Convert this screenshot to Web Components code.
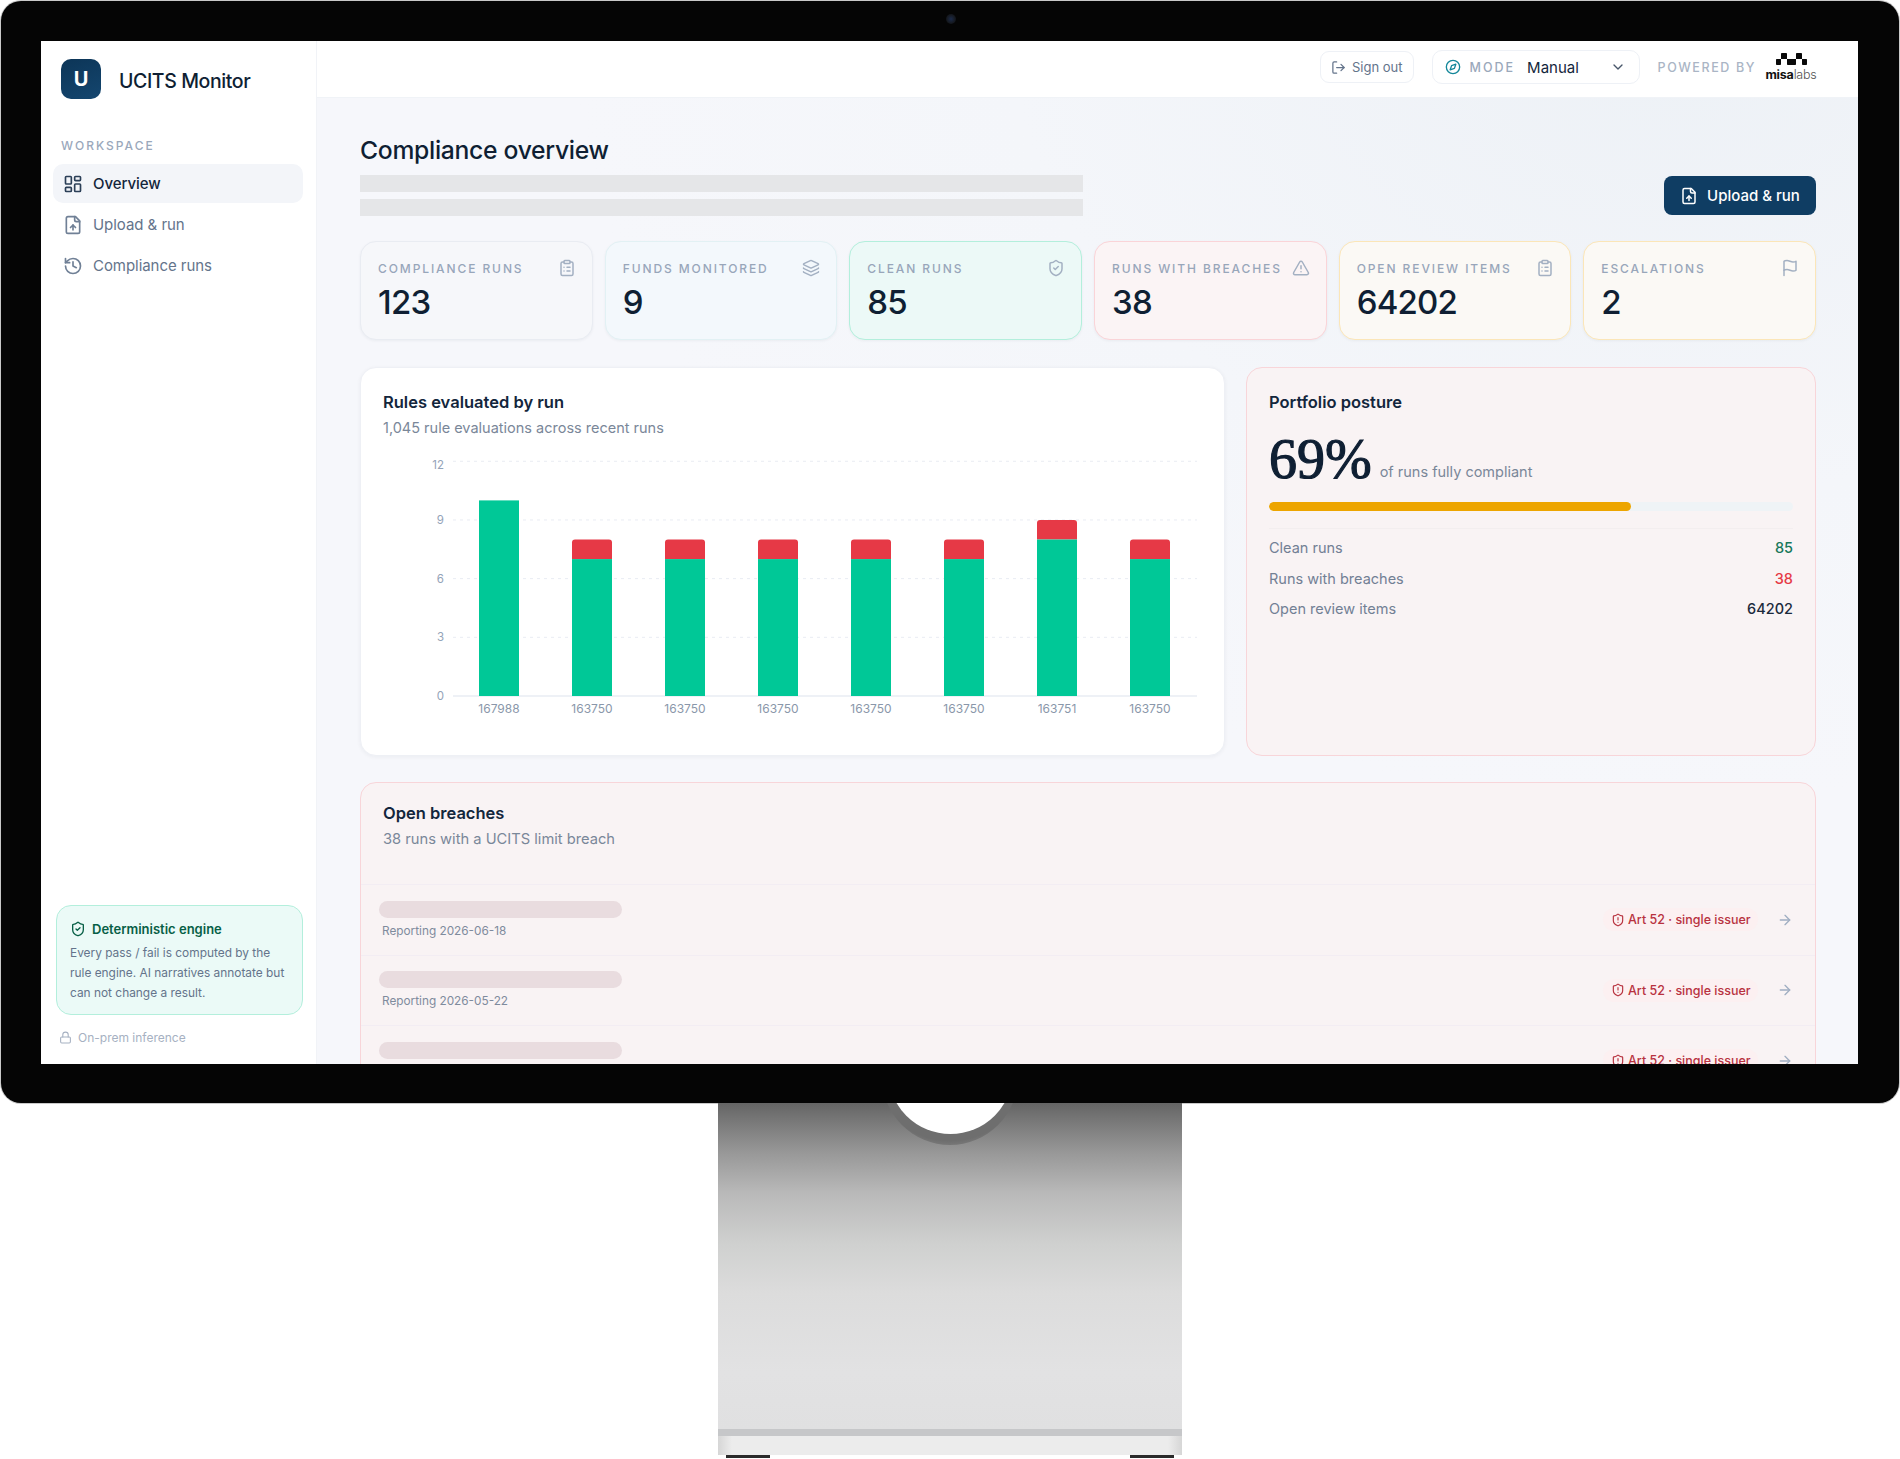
<!DOCTYPE html>
<html lang="en">
<head>
<meta charset="utf-8">
<title>UCITS Monitor</title>
<style>
  html, body { margin: 0; background: #fff; }
  body { font-family: "Inter", "Liberation Sans", sans-serif; color: #0f1f33; width: 1900px; height: 1459px; overflow: hidden; }
</style>
</head>
<body>
<monitor-frame>
  <app-sidebar slot="side"></app-sidebar>
  <app-topbar slot="top"></app-topbar>
  <page-head></page-head>
  <kpi-row>
    <kpi-card label="Compliance runs" value="123" icon="clipboard" tone="plain"></kpi-card>
    <kpi-card label="Funds monitored" value="9" icon="layers" tone="blue"></kpi-card>
    <kpi-card label="Clean runs" value="85" icon="shieldcheck" tone="green"></kpi-card>
    <kpi-card label="Runs with breaches" value="38" icon="triangle" tone="red"></kpi-card>
    <kpi-card label="Open review items" value="64202" icon="clipboard" tone="amber"></kpi-card>
    <kpi-card label="Escalations" value="2" icon="flag" tone="amber"></kpi-card>
  </kpi-row>
  <chart-row>
    <rules-chart></rules-chart>
    <posture-card></posture-card>
  </chart-row>
  <breach-card>
    <breach-row date="Reporting 2026-06-18"></breach-row>
    <breach-row date="Reporting 2026-05-22"></breach-row>
    <breach-row date="Reporting 2026-05-22"></breach-row>
  </breach-card>
</monitor-frame>
<monitor-stand></monitor-stand>

<script>
const ICONS = {
  dashboard: '<rect x="3" y="3" width="7" height="9" rx="1"/><rect x="14" y="3" width="7" height="5" rx="1"/><rect x="14" y="12" width="7" height="9" rx="1"/><rect x="3" y="16" width="7" height="5" rx="1"/>',
  fileup: '<path d="M15 2H6a2 2 0 0 0-2 2v16a2 2 0 0 0 2 2h12a2 2 0 0 0 2-2V7Z"/><path d="M14 2v4a2 2 0 0 0 2 2h4"/><path d="M12 12v6"/><path d="m15 15-3-3-3 3"/>',
  history: '<path d="M3 12a9 9 0 1 0 9-9 9.75 9.75 0 0 0-6.74 2.74L3 8"/><path d="M3 3v5h5"/><path d="M12 7v5l4 2"/>',
  clipboard: '<rect x="8" y="2" width="8" height="4" rx="1"/><path d="M16 4h2a2 2 0 0 1 2 2v14a2 2 0 0 1-2 2H6a2 2 0 0 1-2-2V6a2 2 0 0 1 2-2h2"/><path d="M12 11h4"/><path d="M12 16h4"/><path d="M8 11h.01"/><path d="M8 16h.01"/>',
  layers: '<path d="M12.83 2.18a2 2 0 0 0-1.66 0L2.6 6.08a1 1 0 0 0 0 1.83l8.58 3.91a2 2 0 0 0 1.66 0l8.58-3.9a1 1 0 0 0 0-1.83Z"/><path d="M2 12a1 1 0 0 0 .58.91l8.6 3.91a2 2 0 0 0 1.65 0l8.58-3.9A1 1 0 0 0 22 12"/><path d="M2 17a1 1 0 0 0 .58.91l8.6 3.91a2 2 0 0 0 1.65 0l8.58-3.9A1 1 0 0 0 22 17"/>',
  shieldcheck: '<path d="M20 13c0 5-3.5 7.5-7.66 8.95a1 1 0 0 1-.67-.01C7.5 20.5 4 18 4 13V6a1 1 0 0 1 1-1c2 0 4.5-1.2 6.24-2.72a1.17 1.17 0 0 1 1.52 0C14.51 3.81 17 5 19 5a1 1 0 0 1 1 1z"/><path d="m9 12 2 2 4-4"/>',
  shieldalert: '<path d="M20 13c0 5-3.5 7.5-7.66 8.95a1 1 0 0 1-.67-.01C7.5 20.5 4 18 4 13V6a1 1 0 0 1 1-1c2 0 4.5-1.2 6.24-2.72a1.17 1.17 0 0 1 1.52 0C14.51 3.81 17 5 19 5a1 1 0 0 1 1 1z"/><path d="M12 8v4"/><path d="M12 16h.01"/>',
  triangle: '<path d="m21.73 18-8-14a2 2 0 0 0-3.48 0l-8 14A2 2 0 0 0 4 21h16a2 2 0 0 0 1.73-3"/><path d="M12 9v4"/><path d="M12 17h.01"/>',
  flag: '<path d="M4 15s1-1 4-1 5 2 8 2 4-1 4-1V3s-1 1-4 1-5-2-8-2-4 1-4 1z"/><path d="M4 22v-7"/>',
  logout: '<path d="M9 21H5a2 2 0 0 1-2-2V5a2 2 0 0 1 2-2h4"/><path d="m16 17 5-5-5-5"/><path d="M21 12H9"/>',
  compass: '<circle cx="12" cy="12" r="10"/><path d="m16.24 7.76-2.12 6.36-6.36 2.12 2.12-6.36 6.36-2.12z"/>',
  chevron: '<path d="m6 9 6 6 6-6"/>',
  arrow: '<path d="M5 12h14"/><path d="m12 5 7 7-7 7"/>',
  lock: '<rect x="3" y="11" width="18" height="11" rx="2"/><path d="M7 11V7a5 5 0 0 1 10 0v4"/>'
};

function ico(name, size, color) {
  return `<svg width="${size}" height="${size}" viewBox="0 0 24 24" fill="none" stroke="${color}" stroke-width="2" stroke-linecap="round" stroke-linejoin="round" style="display:block;flex:none">${ICONS[name]}</svg>`;
}

class MonitorFrame extends HTMLElement {
  constructor() {
    super();
    this.attachShadow({ mode: 'open' }).innerHTML = `
    <style>
      :host { display: block; position: relative; box-sizing: border-box; width: 1898px; height: 1102px; margin: 1px 0 0 1px; padding: 40px 41px 39px 40px; background: #050505; border-radius: 20px; box-shadow: 0 0 0 1px #c9c9c9; }
      .camera { position: absolute; left: 945px; top: 13px; width: 10px; height: 10px; border-radius: 50%; background: radial-gradient(circle, #1b2a4a 0, #161a22 55%, #0a0a0a 100%); }
      .screen { display: flex; height: 1023px; background: #fff; overflow: hidden; }
      .main { flex: 1; min-width: 0; display: flex; flex-direction: column; background: radial-gradient(ellipse 1100px 760px at 88% 0%, #edf1f6 0%, #f4f6fa 60%, #f6f7fb 100%); }
      .content { flex: 1; padding: 0 42px 0 43px; overflow: hidden; }
    </style>
    <div class="camera"></div>
    <div class="screen">
      <slot name="side"></slot>
      <div class="main">
        <slot name="top"></slot>
        <div class="content"><slot></slot></div>
      </div>
    </div>`;
  }
}

class NavItem extends HTMLElement {
  connectedCallback() {
    const active = this.hasAttribute('active');
    this.attachShadow({ mode: 'open' }).innerHTML = `
    <style>
      :host { display: flex; align-items: center; gap: 10px; height: 39px; padding-left: 10px; border-radius: 10px; font-size: 15px; letter-spacing: -0.05px; font-weight: ${active ? 500 : 400}; color: ${active ? '#13263c' : '#64748b'}; background: ${active ? '#f3f5f9' : 'transparent'}; }
    </style>
    ${ico(this.getAttribute('icon'), 20, active ? '#2b3f57' : '#708096')}<span>${this.getAttribute('label')}</span>`;
  }
}

class AppSidebar extends HTMLElement {
  constructor() {
    super();
    this.attachShadow({ mode: 'open' }).innerHTML = `
    <style>
      :host { display: flex; flex-direction: column; box-sizing: border-box; width: 276px; height: 100%; padding: 18px 13px 0 12px; background: #fff; border-right: 1px solid #f1f3f7; }
      .brand { display: flex; align-items: center; gap: 18px; padding-left: 8px; }
      .logo { width: 40px; height: 40px; border-radius: 10px; background: linear-gradient(160deg, #0c3557, #14466f); color: #fff; display: flex; align-items: center; justify-content: center; font-weight: 700; font-size: 20px; }
      .name { margin-top: 3px; font-size: 19.5px; font-weight: 500; letter-spacing: -0.4px; color: #0f1f33; }
      .section { margin: 39px 0 10px 8px; height: 16px; line-height: 16px; font-size: 12px; font-weight: 500; letter-spacing: 2px; color: #9aa8bb; }
      nav { display: flex; flex-direction: column; gap: 2px; }
      .engine { margin: auto 0 0 3px; box-sizing: border-box; height: 110px; padding: 14px 6px 0 13px; border: 1px solid #b3efdc; border-radius: 15px; background: #ebfaf7; }
      .engine h4 { display: flex; align-items: center; gap: 6px; margin: 0 0 5px 0; font-size: 13px; line-height: 18px; font-weight: 600; color: #075f46; }
      .engine p { margin: 0; font-size: 11.9px; line-height: 20px; color: #64748b; white-space: nowrap; }
      .prem { display: flex; align-items: center; gap: 6px; height: 16px; margin: 14px 0 19px 6px; font-size: 12px; color: #a6b1c2; }
    </style>
    <div class="brand"><div class="logo">U</div><div class="name">UCITS Monitor</div></div>
    <div class="section">WORKSPACE</div>
    <nav>
      <nav-item icon="dashboard" label="Overview" active></nav-item>
      <nav-item icon="fileup" label="Upload &amp; run"></nav-item>
      <nav-item icon="history" label="Compliance runs"></nav-item>
    </nav>
    <div class="engine">
      <h4>${ico('shieldcheck', 16, '#075f46')}Deterministic engine</h4>
      <p>Every pass / fail is computed by the<br>rule engine. AI narratives annotate but<br>can not change a result.</p>
    </div>
    <div class="prem">${ico('lock', 13, '#a6b1c2')}On-prem inference</div>`;
  }
}

class AppTopbar extends HTMLElement {
  constructor() {
    super();
    this.attachShadow({ mode: 'open' }).innerHTML = `
    <style>
      :host { display: flex; align-items: center; justify-content: flex-end; box-sizing: border-box; height: 57px; flex: none; padding: 0 42px 4px 0; background: #fff; border-bottom: 1px solid #f0f3f7; }
      .signout { display: flex; align-items: center; gap: 6px; box-sizing: border-box; height: 32px; padding: 0 10px; border: 1px solid #eef1f6; border-radius: 9px; font-size: 13px; color: #64748b; }
      .mode { display: flex; align-items: center; box-sizing: border-box; width: 208px; height: 34px; margin-left: 18px; padding: 0 13px 0 12px; border: 1px solid #eef1f6; border-radius: 10px; }
      .mode b { margin-left: 9px; font-size: 12.5px; font-weight: 500; letter-spacing: 2px; color: #9aa8bb; }
      .mode span { margin-left: 12px; flex: 1; font-size: 15px; color: #13263c; }
      .powered { margin-left: 18px; font-size: 12.5px; font-weight: 500; letter-spacing: 1.6px; color: #aab5c5; white-space: nowrap; }
      .misa { margin-left: 10px; width: 50px; display: flex; flex-direction: column; align-items: center; }
      .misa svg { display: block; }
      .misa div { margin-top: 2px; font-size: 12.5px; line-height: 15px; letter-spacing: -0.2px; color: #555; font-weight: 300; white-space: nowrap; }
      .misa strong { font-weight: 700; color: #111; }
    </style>
    <div class="signout">${ico('logout', 15, '#64748b')}Sign out</div>
    <div class="mode">${ico('compass', 16, '#14879a')}<b>MODE</b><span>Manual</span>${ico('chevron', 16, '#475569')}</div>
    <div class="powered">POWERED BY</div>
    <div class="misa">
      <svg width="31" height="12" viewBox="0 0 31 12" fill="#0a0a0a"><path d="M5 .8q0-.8.8-.8h4.4q.8 0 .8.8V6H5zM20 .8q0-.8.8-.8h4.4q.8 0 .8.8V6h-6zM0 6.6Q0 6 .8 6H5v5.2q0 .8-.8.8H.8q-.8 0-.8-.8zM11 6h9v5.2q0 .8-.8.8h-7.4q-.8 0-.8-.8zM26 6h4.2q.8 0 .8.6v4.6q0 .8-.8.8h-3.4q-.8 0-.8-.8z"/></svg>
      <div><strong>misa</strong>labs</div>
    </div>`;
  }
}

class PageHead extends HTMLElement {
  constructor() {
    super();
    this.attachShadow({ mode: 'open' }).innerHTML = `
    <style>
      :host { display: flex; justify-content: space-between; align-items: flex-end; padding-top: 36px; }
      h1 { margin: 0; font-size: 24.7px; line-height: 32px; font-weight: 500; letter-spacing: -0.3px; color: #0f1f33; }
      .bar { width: 723px; height: 17px; background: #e5e6e8; }
      .bar.one { margin-top: 9px; }
      .bar.two { margin-top: 7px; }
      .upload { display: flex; align-items: center; justify-content: center; gap: 9px; box-sizing: border-box; width: 152px; height: 39px; margin-bottom: 1px; border-radius: 8px; background: #0f3d63; color: #fff; font-size: 15px; font-weight: 500; }
    </style>
    <div>
      <h1>Compliance overview</h1>
      <div class="bar one"></div>
      <div class="bar two"></div>
    </div>
    <div class="upload">${ico('fileup', 18, '#fff')}Upload &amp; run</div>`;
  }
}

class KpiRow extends HTMLElement {
  constructor() {
    super();
    this.attachShadow({ mode: 'open' }).innerHTML = `
    <style>
      :host { display: grid; grid-template-columns: repeat(6, 1fr); gap: 12px; margin-top: 25px; }
    </style>
    <slot></slot>`;
  }
}

const KPI_TONES = {
  plain: ['#f6f7fa', '#e9ecf2'],
  blue: ['#f3f8fc', '#e2f1f4'],
  green: ['#ecf9f7', '#b3efdc'],
  red: ['#fbf4f5', '#fad4d8'],
  amber: ['#fbf9f5', '#fbe6b8']
};

class KpiCard extends HTMLElement {
  connectedCallback() {
    const [bg, border] = KPI_TONES[this.getAttribute('tone')];
    this.attachShadow({ mode: 'open' }).innerHTML = `
    <style>
      :host { display: block; box-sizing: border-box; height: 99px; padding: 16px 16px 0 17px; background: ${bg}; border: 1.5px solid ${border}; border-radius: 16px; box-shadow: 0 1px 3px rgba(15, 31, 51, .05); }
      .head { display: flex; justify-content: space-between; align-items: center; height: 20px; }
      .label { font-size: 12px; font-weight: 500; letter-spacing: 1.9px; color: #98a6ba; text-transform: uppercase; white-space: nowrap; }
      .value { margin-top: 6px; font-size: 33px; line-height: 36px; font-weight: 500; letter-spacing: -0.8px; color: #0f1f33; }
    </style>
    <div class="head"><span class="label">${this.getAttribute('label')}</span>${ico(this.getAttribute('icon'), 18, '#a3b0c2')}</div>
    <div class="value">${this.getAttribute('value')}</div>`;
  }
}

class ChartRow extends HTMLElement {
  constructor() {
    super();
    this.attachShadow({ mode: 'open' }).innerHTML = `
    <style>
      :host { display: grid; grid-template-columns: 865px 1fr; gap: 21px; height: 389px; margin-top: 27px; }
    </style>
    <slot></slot>`;
  }
}

class RulesChart extends HTMLElement {
  constructor() {
    super();
    // chart coords are screen px minus the svg origin (383, 438)
    const runs = [['167988', 10, 0], ['163750', 7, 1], ['163750', 7, 1], ['163750', 7, 1], ['163750', 7, 1], ['163750', 7, 1], ['163751', 8, 1], ['163750', 7, 1]];
    const unit = 19.56, base = 258, left = 70, right = 814;
    let marks = '';
    [[12, 4], [9, 0], [6, 0], [3, 0], [0, 0]].forEach(([t, nudge]) => {
      const y = base - t * unit;
      marks += `<line x1="${left}" x2="${right}" y1="${y}" y2="${y}" stroke="#e9ecf3" stroke-width="${t ? 1 : 1.5}" ${t ? 'stroke-dasharray="3 4"' : ''}/>`;
      marks += `<text x="61" y="${y + 4 + nudge}" text-anchor="end" font-size="11.5" fill="#94a3b8">${t}</text>`;
    });
    runs.forEach(([id, ok, bad], i) => {
      const x = 96 + i * 93;
      if (bad) marks += `<path d="M${x} ${base - ok * unit}v${-(bad * unit - 3)}q0-3 3-3h34q3 0 3 3v${bad * unit - 3}z" fill="#e63946"/>`;
      marks += `<rect x="${x}" y="${base - ok * unit}" width="40" height="${ok * unit}" fill="#00c897"/>`;
      marks += `<text x="${x + 20}" y="275" text-anchor="middle" font-size="12" fill="#8a97aa">${id}</text>`;
    });
    this.attachShadow({ mode: 'open' }).innerHTML = `
    <style>
      :host { display: block; box-sizing: border-box; padding: 23px 22px 0; background: #fff; border: 1px solid #eef0f5; border-radius: 16px; box-shadow: 0 1px 4px rgba(15, 31, 51, .05); }
      h3 { margin: 0; font-size: 16.5px; line-height: 22px; font-weight: 600; color: #13263c; }
      p { margin: 5px 0 0; font-size: 14.5px; line-height: 20px; color: #7a8799; }
      svg { display: block; font-family: "Inter", "Liberation Sans", sans-serif; }
    </style>
    <h3>Rules evaluated by run</h3>
    <p>1,045 rule evaluations across recent runs</p>
    <svg width="820" height="290" viewBox="0 0 820 290">${marks}</svg>`;
  }
}

class PostureCard extends HTMLElement {
  constructor() {
    super();
    this.attachShadow({ mode: 'open' }).innerHTML = `
    <style>
      :host { display: block; box-sizing: border-box; padding: 23px 22px 0; background: #f9f3f4; border: 1.5px solid #f8d5d9; border-radius: 16px; }
      h3 { margin: 0; font-size: 16.5px; line-height: 22px; font-weight: 600; color: #13263c; }
      .big { display: flex; align-items: baseline; gap: 8px; margin-top: 18px; }
      .pct { font-family: "Liberation Serif", serif; font-size: 56px; line-height: 56px; color: #0f1f33; -webkit-text-stroke: 1.2px #0f1f33; }
      .of { position: relative; top: -1px; font-size: 14.5px; color: #7a8799; }
      .track { height: 9px; margin-top: 15px; border-radius: 5px; background: #eff3f6; overflow: hidden; }
      .fill { width: 69%; height: 100%; border-radius: 5px; background: #eda500; }
      .rows { display: flex; flex-direction: column; gap: 10.5px; margin-top: 17px; padding-top: 9px; border-top: 1px solid #f3eeef; }
      .row { display: flex; justify-content: space-between; font-size: 14.5px; line-height: 20px; color: #728094; }
      .row b { font-weight: 500; }
    </style>
    <h3>Portfolio posture</h3>
    <div class="big"><span class="pct">69%</span><span class="of">of runs fully compliant</span></div>
    <div class="track"><div class="fill"></div></div>
    <div class="rows">
      <div class="row"><span>Clean runs</span><b style="color:#17775a">85</b></div>
      <div class="row"><span>Runs with breaches</span><b style="color:#e63946">38</b></div>
      <div class="row"><span>Open review items</span><b style="color:#1c2a3c">64202</b></div>
    </div>`;
  }
}

class BreachCard extends HTMLElement {
  constructor() {
    super();
    this.attachShadow({ mode: 'open' }).innerHTML = `
    <style>
      :host { display: block; margin-top: 26px; background: #f9f3f4; border: 1.5px solid #f8d5d9; border-radius: 16px 16px 0 0; }
      header { padding: 19px 22px 35px; }
      h3 { margin: 0; font-size: 16.5px; line-height: 22px; font-weight: 600; color: #13263c; }
      p { margin: 5px 0 0; font-size: 14.7px; line-height: 20px; color: #7a8799; }
    </style>
    <header>
      <h3>Open breaches</h3>
      <p>38 runs with a UCITS limit breach</p>
    </header>
    <slot></slot>`;
  }
}

class BreachRow extends HTMLElement {
  connectedCallback() {
    this.attachShadow({ mode: 'open' }).innerHTML = `
    <style>
      :host { display: flex; align-items: center; justify-content: space-between; box-sizing: border-box; height: 70.5px; padding: 0 22px 0 18px; border-top: 1px solid #f3edf3; }
      .pill { width: 243px; height: 17px; border-radius: 9px; background: #e9dcdf; }
      .date { margin: 5px 0 0 3px; font-size: 11.8px; line-height: 16px; color: #7f8b9d; }
      .right { display: flex; align-items: center; gap: 19px; }
      .badge { display: flex; align-items: center; gap: 3px; box-sizing: border-box; width: 155px; height: 23px; padding-left: 8px; border-radius: 12px; background: #fcf0f1; font-size: 12.5px; font-weight: 500; color: #b8323f; white-space: nowrap; }
    </style>
    <div>
      <div class="pill"></div>
      <div class="date">${this.getAttribute('date')}</div>
    </div>
    <div class="right">
      <span class="badge">${ico('shieldalert', 14, '#b8323f')}Art 52 · single issuer</span>
      ${ico('arrow', 16, '#a0aec2')}
    </div>`;
  }
}

class MonitorStand extends HTMLElement {
  constructor() {
    super();
    this.attachShadow({ mode: 'open' }).innerHTML = `
    <style>
      :host { display: block; position: relative; box-sizing: border-box; width: 464px; height: 355px; margin-left: 718px; background: linear-gradient(180deg, #656565 0, #7c7c7c 22px, #989898 50px, #b9b9b9 90px, #cfd0cf 140px, #dcdcdc 190px, #e2e2e3 270px, #e0e0e1 326px) no-repeat; background-size: 100% 352px; overflow: hidden; }
      .ring, .hole { position: absolute; border-radius: 50%; }
      .ring { left: 164px; top: -94px; width: 136px; height: 136px; background: radial-gradient(circle at 50% 38%, #6e6e6e 74%, #858585 84%, #8d8d8d 100%); }
      .hole { left: 169.5px; top: -94px; width: 125px; height: 125px; background: #fff; }
      .base { position: absolute; left: 0; right: 0; bottom: 3px; height: 26px; background: linear-gradient(90deg, #d6d6d6 0, #ececec 14px, #ececec calc(100% - 14px), #d6d6d6 100%); border-top: 7px solid #c6c7c9; box-sizing: border-box; }
      .foot { position: absolute; bottom: 0; width: 44px; height: 3px; background: #2a2a2a; }
    </style>
    <div class="ring"></div>
    <div class="hole"></div>
    <div class="base"></div>
    <div class="foot" style="left:8px"></div>
    <div class="foot" style="right:8px"></div>`;
  }
}

customElements.define('monitor-frame', MonitorFrame);
customElements.define('nav-item', NavItem);
customElements.define('app-sidebar', AppSidebar);
customElements.define('app-topbar', AppTopbar);
customElements.define('page-head', PageHead);
customElements.define('kpi-row', KpiRow);
customElements.define('kpi-card', KpiCard);
customElements.define('chart-row', ChartRow);
customElements.define('rules-chart', RulesChart);
customElements.define('posture-card', PostureCard);
customElements.define('breach-card', BreachCard);
customElements.define('breach-row', BreachRow);
customElements.define('monitor-stand', MonitorStand);
</script>
</body>
</html>
